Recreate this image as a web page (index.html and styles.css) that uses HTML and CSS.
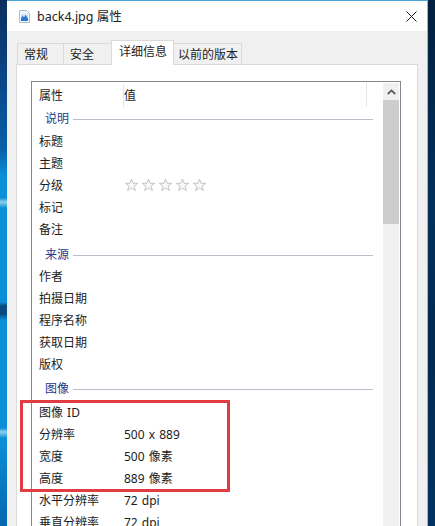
FILE: index.html
```html
<!DOCTYPE html>
<html lang="zh-CN">
<head>
<meta charset="utf-8">
<title>back4.jpg 属性</title>
<link rel="stylesheet" href="styles.css">
</head>
<body>
<div class="desktop">
  <div class="wall-left"></div>
  <main class="window">
    <header class="titlebar">
      <svg class="file-icon" width="11" height="13" viewBox="0 0 11 13">
        <path d="M0.5 0.5H7.5L10.5 3.5V12.5H0.5Z" fill="#f4f8fc" stroke="#a9bdd2"/>
        <path d="M2 4H9V11H2Z" fill="#cfe3f6"/>
        <path d="M2 11V8.5L3.5 5.5L5 7.5L6.5 5L9 8.5V11Z" fill="#2a78d0"/>
      </svg>
      <span class="title">back4.jpg 属性</span>
      <svg class="close" width="11" height="11" viewBox="0 0 11 11"><path d="M0.5 0.5L10.5 10.5M10.5 0.5L0.5 10.5" stroke="#1a1a1a" stroke-width="1" fill="none"/></svg>
    </header>
    <div class="body">
      <nav class="tabs">
        <div class="tab t1">常规</div>
        <div class="tab t2">安全</div>
        <div class="tab t3 active">详细信息</div>
        <div class="tab t4">以前的版本</div>
      </nav>
      <section class="panel">
        <div class="listbox">
          <div class="list">
            <div class="head"><span class="c1 sep">属性</span><span class="c2">值</span><span class="sep2"></span></div>
            <div class="group"><span>说明</span><i></i></div>
            <div class="row"><span class="c1">标题</span></div>
            <div class="row"><span class="c1">主题</span></div>
            <div class="row"><span class="c1">分级</span>
              <span class="c2 stars">
                <svg width="15" height="14" viewBox="0 0 15 14"><use href="#star"/></svg>
                <svg width="15" height="14" viewBox="0 0 15 14"><use href="#star"/></svg>
                <svg width="15" height="14" viewBox="0 0 15 14"><use href="#star"/></svg>
                <svg width="15" height="14" viewBox="0 0 15 14"><use href="#star"/></svg>
                <svg width="15" height="14" viewBox="0 0 15 14"><use href="#star"/></svg>
              </span>
            </div>
            <div class="row"><span class="c1">标记</span></div>
            <div class="row"><span class="c1">备注</span></div>
            <div class="group g2"><span>来源</span><i></i></div>
            <div class="row"><span class="c1">作者</span></div>
            <div class="row"><span class="c1">拍摄日期</span></div>
            <div class="row"><span class="c1">程序名称</span></div>
            <div class="row"><span class="c1">获取日期</span></div>
            <div class="row"><span class="c1">版权</span></div>
            <div class="group g3"><span>图像</span><i></i></div>
            <div class="row"><span class="c1 spaced">图像 ID</span></div>
            <div class="row"><span class="c1">分辨率</span><span class="c2 spaced">500 x 889</span></div>
            <div class="row"><span class="c1">宽度</span><span class="c2 spaced">500 像素</span></div>
            <div class="row"><span class="c1">高度</span><span class="c2 spaced">889 像素</span></div>
            <div class="row"><span class="c1">水平分辨率</span><span class="c2 spaced">72 dpi</span></div>
            <div class="row"><span class="c1">垂直分辨率</span><span class="c2 spaced">72 dpi</span></div>
          </div>
          <div class="scrollbar">
            <div class="sb-btn"><svg width="9" height="6" viewBox="0 0 9 6"><path d="M0.8 5L4.5 1.4L8.2 5" fill="none" stroke="#5a5a5a" stroke-width="1.8"/></svg></div>
            <div class="sb-thumb"></div>
          </div>
        </div>
      </section>
    </div>
  </main>
  <div class="wall-right"></div>
  <div class="annotation"></div>
</div>
<svg class="defs" width="0" height="0"><defs>
  <path id="star" d="M7.5 1L9.1 5.3H13.7L10 8.1L11.4 12.6L7.5 9.9L3.6 12.6L5 8.1L1.3 5.3H5.9Z" fill="#fafafa" stroke="#c4c4c4" stroke-width="1"/>
</defs></svg>
</body>
</html>
```
FILE: styles.css
```css
* { box-sizing: border-box; }
html, body { margin: 0; height: 100%; overflow: hidden; }
body { font: 12px/16px "Noto Sans", "Noto Sans CJK SC", sans-serif; color: #1c1c1c; }
.defs { position: absolute; }
.desktop { position: relative; display: flex; width: 435px; height: 526px; overflow: hidden; }
.wall-left {
  width: 7px;
  background: linear-gradient(180deg,
    #0a2f5e 0, #0a3f7e 60px, #0860a8 150px, #0b8fd8 175px, #0b8fd8 198px,
    #8fd0ee 202px, #0b8fd8 208px, #0b8fd8 302px, #0a4a80 306px, #0a4a80 314px,
    #0b8fd8 320px, #0b8fd8 428px, #8fd0ee 432px, #0b8fd8 438px, #0880c8 470px, #0668b0 526px);
}
.wall-right { width: 7px; background: linear-gradient(180deg, #02203f 0%, #02305c 40%, #032a50 65%, #033361 100%); }
.window { width: 421px; display: flex; flex-direction: column; border-top: 1px solid #4aa3d6; border-right: 1px solid #7cc4dc; background: #fff; }
.titlebar { height: 30px; flex: none; display: flex; align-items: center; padding: 0 10px 0 12px; background: #fff; }
.file-icon { flex: none; margin-right: 7px; margin-top: 1px; }
.title { flex: 1; font-size: 12.5px; color: #222; margin-top: 1px; }
.close { flex: none; margin-top: 1px; }
.body { flex: 1; min-height: 0; display: flex; flex-direction: column; background: #f0f0f0; padding: 10px 9px 0 9px; }
.tabs { height: 23px; flex: none; display: flex; align-items: flex-end; padding-left: 1px; position: relative; z-index: 1; }
.tab { height: 21px; border: 1px solid #dadada; border-bottom: 0; border-left-width: 0; line-height: 22px; color: #222; background: #f0f0f0; padding-left: 6px; white-space: nowrap; }
.t1 { width: 47px; border-left-width: 1px; }
.t2 { width: 48px; }
.t3 { width: 63px; }
.t4 { width: 68px; padding-left: 4px; }
.tab.active { height: 25px; margin-bottom: -1px; background: #fff; border-left-width: 1px; border-right-width: 1px; line-height: 22px; margin-left: -1px; padding-left: 7px; }
.panel { flex: 1; min-height: 0; background: #fff; border: 1px solid #dadada; border-bottom: 0; padding: 16px 16px 0 14px; }
.listbox { height: 460px; display: flex; border: 1px solid #828790; background: #fff; padding: 1px; }
.list { flex: 1; min-width: 0; overflow: hidden; padding-left: 6px; }
.head { height: 24px; display: flex; align-items: center; position: relative; padding-top: 1px; }
.row { height: 22px; display: flex; align-items: center; padding-top: 2px; }
.c1 { width: 85px; flex: none; }
.c2 { flex: none; }
.spaced { word-spacing: 1px; }
.sep { height: 24px; line-height: 24px; border-right: 1px solid #e5e5e5; }
.sep2 { position: absolute; left: 327px; top: 0; height: 24px; border-right: 1px solid #e5e5e5; }
.group { height: 22px; display: flex; align-items: center; padding-left: 6px; margin-top: 1px; color: #1e3a8a; }
.g2 { margin-top: 4px; margin-bottom: -1px; }
.g3 { margin-top: 3px; margin-bottom: 1px; }
.group i { flex: none; width: 300px; height: 1px; margin-left: 4px; background: #bcc0cc; }
.stars { display: flex; gap: 2px; margin-top: -2px; }
.stars svg { display: block; }
.scrollbar { width: 16px; flex: none; display: flex; flex-direction: column; background: #f0f0f0; }
.sb-btn { height: 17px; display: flex; align-items: center; justify-content: center; }
.sb-thumb { height: 124px; background: #cdcdcd; }
.annotation { position: absolute; left: 20px; top: 400px; width: 210px; height: 92px; border: 3px solid #e03c41; }
```
